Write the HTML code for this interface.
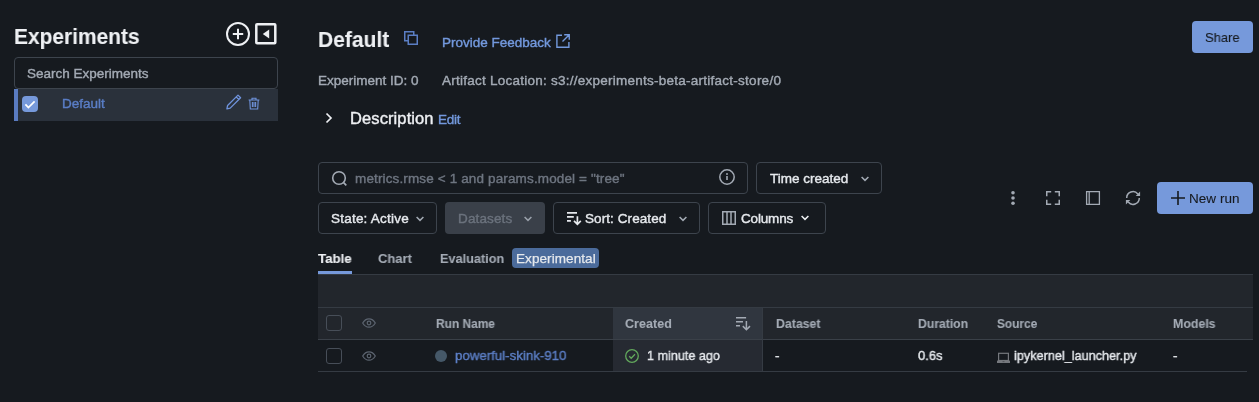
<!DOCTYPE html>
<html><head><meta charset="utf-8">
<style>
*{box-sizing:border-box;margin:0;padding:0}
html,body{width:1259px;height:402px;overflow:hidden;background:#161a1f;font-family:"Liberation Sans",sans-serif;color:#e6e9ed}
.a{position:absolute;white-space:nowrap;-webkit-text-stroke:0.4px currentColor;will-change:transform}
.b{position:absolute}
.btn{position:absolute;border:1px solid #3d444d;border-radius:4px;height:32px}
svg{position:absolute;overflow:visible}
</style></head><body>
<div class="a" style="left:14.00px;top:25.75px;font-size:22.5px;line-height:22.5px;font-weight:700;color:#eef0f3;letter-spacing:0px;transform:scaleX(0.93);transform-origin:0 0;-webkit-text-stroke:0.1px currentColor;">Experiments</div>
<svg style="left:226px;top:22px" width="24" height="24" viewBox="0 0 24 24"><circle cx="12" cy="12" r="11" fill="none" stroke="#eef0f3" stroke-width="2"/><path d="M6.8 12h10.4M12 6.8v10.4" stroke="#eef0f3" stroke-width="2"/></svg>
<svg style="left:255px;top:23px" width="22" height="22" viewBox="0 0 22 22"><rect x="1.3" y="1.3" width="19" height="19" rx="0.8" fill="none" stroke="#eef0f3" stroke-width="2.5"/><path d="M7.8 11L14.2 6.5v9z" fill="#eef0f3"/></svg>
<div class="b" style="left:14px;top:57px;width:264px;height:32px;border:1px solid #3d444d;border-radius:4px"></div>
<div class="b" style="left:14px;top:89px;width:264px;height:32px;background:#2a313b"></div>
<div class="b" style="left:14px;top:89px;width:4px;height:32px;background:#5a7bc0"></div>
<div class="b" style="left:22px;top:96px;width:16px;height:16px;border-radius:4px;background:#7699db"></div>
<svg style="left:22px;top:96px" width="16" height="16" viewBox="0 0 16 16"><path d="M3.4 8.3l3 3.2L12.6 5.4" fill="none" stroke="#fff" stroke-width="1.7"/></svg>
<svg style="left:225px;top:93px" width="16" height="16" viewBox="0 0 16 16"><path d="M13 2.1L15.6 4.7L5.2 15.1L1.9 15.9L2.6 12.5Z M11.2 3.9l2.6 2.6" fill="none" stroke="#6f93dc" stroke-width="1.3" stroke-linejoin="round"/></svg>
<svg style="left:248px;top:97px" width="12" height="13" viewBox="0 0 12 13"><path d="M0.6 3h10.8M4 3V1.3h4V3M1.8 3.2l.5 8.8h7.4l.5-8.8M4.4 5v5M6 5v5M7.6 5v5" fill="none" stroke="#6f93dc" stroke-width="1.1"/></svg>
<div class="a" style="left:27.20px;top:66.57px;font-size:13.5px;line-height:13.5px;font-weight:400;color:#a3aab4;letter-spacing:0px;">Search Experiments</div>
<div class="a" style="left:61.80px;top:96.57px;font-size:13.5px;line-height:13.5px;font-weight:400;color:#5a7ec6;letter-spacing:0px;">Default</div>
<div class="a" style="left:318.00px;top:29.25px;font-size:22.5px;line-height:22.5px;font-weight:700;color:#eef0f3;letter-spacing:0px;transform:scaleX(0.934);transform-origin:0 0;-webkit-text-stroke:0.1px currentColor;">Default</div>
<svg style="left:404px;top:31px" width="14" height="14" viewBox="0 0 14 14"><path d="M0.75 0.75h9v9h-9z" fill="none" stroke="#5b7ec4" stroke-width="1.5"/><path d="M4.25 4.25h9v9h-9z" fill="#161a1f" stroke="#5b7ec4" stroke-width="1.5"/></svg>
<svg style="left:556px;top:34px" width="14" height="14" viewBox="0 0 14 14"><path d="M6 1.2H0.9v12h12V8M8.2 0.75h5.05v5.05M13.25 0.75L6.5 7.5" fill="none" stroke="#7399dd" stroke-width="1.4"/></svg>
<div class="b" style="left:1192px;top:21px;width:61px;height:32px;border-radius:4px;background:#7699db"></div>
<div class="a" style="left:442.00px;top:35.57px;font-size:13.5px;line-height:13.5px;font-weight:400;color:#7399dd;letter-spacing:0px;">Provide Feedback</div>
<div class="a" style="left:1204.70px;top:30.57px;font-size:13.5px;line-height:13.5px;font-weight:400;color:#161a1f;letter-spacing:0px;-webkit-text-stroke:0.1px currentColor;transform:scaleX(0.96);transform-origin:0 0;">Share</div>
<div class="a" style="left:318.00px;top:73.57px;font-size:13.5px;line-height:13.5px;font-weight:400;color:#a3aab4;letter-spacing:-0.0px;">Experiment ID: 0</div>
<div class="a" style="left:442.00px;top:73.57px;font-size:13.5px;line-height:13.5px;font-weight:400;color:#a3aab4;letter-spacing:0.25px;">Artifact Location: s3://experiments-beta-artifact-store/0</div>
<svg style="left:324px;top:112px" width="10" height="12" viewBox="0 0 10 12"><path d="M2.5 1.5L7 6l-4.5 4.5" fill="none" stroke="#eef0f3" stroke-width="1.7"/></svg>
<div class="a" style="left:350.00px;top:110.03px;font-size:16.5px;line-height:16.5px;font-weight:400;color:#eef0f3;letter-spacing:0.1px;">Description</div>
<div class="a" style="left:437.50px;top:112.77px;font-size:13.5px;line-height:13.5px;font-weight:400;color:#7399dd;letter-spacing:-0.25px;">Edit</div>
<div class="btn" style="left:318px;top:162px;width:430px"></div>
<svg style="left:331px;top:170px" width="16" height="16" viewBox="0 0 16 16"><circle cx="8" cy="8" r="6.3" fill="none" stroke="#a3aab4" stroke-width="1.6"/><path d="M12.6 12.6l2.7 2.7" stroke="#a3aab4" stroke-width="1.7"/></svg>
<svg style="left:719px;top:169px" width="16" height="16" viewBox="0 0 16 16"><circle cx="8" cy="8" r="7.2" fill="none" stroke="#a3aab4" stroke-width="1.5"/><path d="M8 7.1v4" stroke="#a3aab4" stroke-width="1.6"/><circle cx="8" cy="5" r="0.95" fill="#a3aab4"/></svg>
<div class="btn" style="left:756px;top:162px;width:126px"></div>
<svg style="left:860px;top:175px" width="10" height="8" viewBox="0 0 10 8"><path d="M1.6 2l3.4 3.4L8.4 2" fill="none" stroke="#a3aab4" stroke-width="1.5"/></svg>
<div class="a" style="left:355.00px;top:171.57px;font-size:13.5px;line-height:13.5px;font-weight:400;color:#6e7580;letter-spacing:0.137px;">metrics.rmse &lt; 1 and params.model = "tree"</div>
<div class="a" style="left:769.70px;top:171.57px;font-size:13.5px;line-height:13.5px;font-weight:400;color:#e6e9ed;letter-spacing:0px;">Time created</div>
<div class="btn" style="left:318px;top:202px;width:119px"></div>
<div class="b" style="left:445px;top:202px;width:100px;height:32px;border-radius:4px;background:#3a4049"></div>
<div class="btn" style="left:553px;top:202px;width:147px"></div>
<svg style="left:560px;top:205px" width="24" height="24" viewBox="0 0 24 24"><path d="M7 7.8h10M7 11.8h6.8M7 15.9h3.9M17.4 11.2v8.2M14 15.8l3.4 3.5 3.4-3.5" fill="none" stroke="#e6e9ed" stroke-width="1.7"/></svg>
<div class="btn" style="left:708px;top:202px;width:118px"></div>
<svg style="left:722px;top:211px" width="14" height="14" viewBox="0 0 14 14"><path d="M0.75 0.75h12.5v12.5H0.75zM5 0.75v12.5M9 0.75v12.5" fill="none" stroke="#a3aab4" stroke-width="1.5"/></svg>
<svg style="left:415px;top:215px" width="10" height="8" viewBox="0 0 10 8"><path d="M1.6 2l3.4 3.4L8.4 2" fill="none" stroke="#a3aab4" stroke-width="1.5"/></svg>
<svg style="left:523px;top:215px" width="10" height="8" viewBox="0 0 10 8"><path d="M1.6 2l3.4 3.4L8.4 2" fill="none" stroke="#9aa1ab" stroke-width="1.5"/></svg>
<svg style="left:678px;top:215px" width="10" height="8" viewBox="0 0 10 8"><path d="M1.6 2l3.4 3.4L8.4 2" fill="none" stroke="#a3aab4" stroke-width="1.5"/></svg>
<svg style="left:800px;top:214px" width="10" height="8" viewBox="0 0 10 8"><path d="M1.6 2l3.4 3.4L8.4 2" fill="none" stroke="#eef0f3" stroke-width="1.5"/></svg>
<div class="a" style="left:330.70px;top:211.57px;font-size:13.5px;line-height:13.5px;font-weight:400;color:#e6e9ed;letter-spacing:0.22px;">State: Active</div>
<div class="a" style="left:457.50px;top:211.57px;font-size:13.5px;line-height:13.5px;font-weight:400;color:#6b727d;letter-spacing:0.14px;">Datasets</div>
<div class="a" style="left:585.00px;top:211.57px;font-size:13.5px;line-height:13.5px;font-weight:400;color:#e6e9ed;letter-spacing:0.08px;">Sort: Created</div>
<div class="a" style="left:741.00px;top:211.57px;font-size:13.5px;line-height:13.5px;font-weight:400;color:#e6e9ed;letter-spacing:-0.17px;">Columns</div>
<svg style="left:1010px;top:190px" width="6" height="16" viewBox="0 0 6 16"><circle cx="3" cy="2.8" r="1.8" fill="#a3aab4"/><circle cx="3" cy="8" r="1.8" fill="#a3aab4"/><circle cx="3" cy="13.3" r="1.8" fill="#a3aab4"/></svg>
<svg style="left:1046px;top:191px" width="14" height="14" viewBox="0 0 14 14"><path d="M0.75 5.2V0.75H5.2M8.8 0.75h4.45V5.2M13.25 8.8v4.45H8.8M5.2 13.25H0.75V8.8" fill="none" stroke="#a3aab4" stroke-width="1.5"/></svg>
<svg style="left:1086px;top:191px" width="14" height="14" viewBox="0 0 14 14"><path d="M0.6 0.6h12.8v12.8H0.6zM3.2 0.6v12.8" fill="none" stroke="#a3aab4" stroke-width="1.3"/></svg>
<svg style="left:1125px;top:190px" width="16" height="16" viewBox="0 0 16 16"><path d="M1.7 8A6.3 6.3 0 0 1 12.83 3.95M14.3 8A6.3 6.3 0 0 1 3.17 12.05" fill="none" stroke="#a3aab4" stroke-width="1.5"/><path d="M15.1 1.6v4.4h-4.4z M0.9 14.4v-4.4h4.4z" fill="#a3aab4"/></svg>
<div class="b" style="left:1157px;top:182px;width:96px;height:32px;border-radius:4px;background:#7699db"></div>
<svg style="left:1171px;top:191px" width="14" height="14" viewBox="0 0 14 14"><path d="M0 7h14M7 0v14" stroke="#161a1f" stroke-width="1.6"/></svg>
<div class="a" style="left:1189.30px;top:191.57px;font-size:13.5px;line-height:13.5px;font-weight:400;color:#161a1f;letter-spacing:0.03px;-webkit-text-stroke:0.1px currentColor;">New run</div>
<div class="a" style="left:318.30px;top:251.57px;font-size:13.5px;line-height:13.5px;font-weight:700;color:#eef0f3;letter-spacing:0px;transform:scaleX(0.982);transform-origin:0 0;-webkit-text-stroke:0.1px currentColor;">Table</div>
<div class="a" style="left:378.40px;top:251.57px;font-size:13.5px;line-height:13.5px;font-weight:700;color:#a3aab4;letter-spacing:0px;transform:scaleX(0.961);transform-origin:0 0;-webkit-text-stroke:0.1px currentColor;">Chart</div>
<div class="a" style="left:440.00px;top:251.57px;font-size:13.5px;line-height:13.5px;font-weight:700;color:#a3aab4;letter-spacing:0px;transform:scaleX(0.941);transform-origin:0 0;-webkit-text-stroke:0.1px currentColor;">Evaluation</div>
<div class="b" style="left:512px;top:248px;width:87px;height:20px;border-radius:4px;background:#4b6b9b"></div>
<div class="a" style="left:515.80px;top:251.57px;font-size:13.5px;line-height:13.5px;font-weight:400;color:#e6e9ed;letter-spacing:0.08px;-webkit-text-stroke:0.25px currentColor;">Experimental</div>
<div class="b" style="left:318px;top:271px;width:34px;height:3px;background:#7699db"></div>
<div class="b" style="left:318px;top:274px;width:935px;height:1px;background:#353b43"></div>
<div class="b" style="left:318px;top:275px;width:935px;height:64px;background:#22262c"></div>
<div class="b" style="left:318px;top:307px;width:935px;height:1px;background:#353b43"></div>
<div class="b" style="left:613px;top:308px;width:150px;height:31px;background:#30363f"></div>
<div class="b" style="left:318px;top:339px;width:935px;height:1px;background:#3a4048"></div>
<div class="b" style="left:613px;top:340px;width:150px;height:31px;background:#262a32"></div>
<div class="b" style="left:762px;top:308px;width:1px;height:63px;background:#353b43"></div>
<div class="b" style="left:318px;top:371px;width:929px;height:1px;background:#353b43"></div>
<div class="b" style="left:326px;top:315px;width:16px;height:16px;border:1px solid #474e58;border-radius:3px"></div>
<div class="b" style="left:326px;top:348px;width:16px;height:16px;border:1px solid #474e58;border-radius:3px"></div>
<svg style="left:362px;top:318px" width="14" height="10" viewBox="0 0 14 10"><path d="M0.7 5C2.5 1.9 4.6 0.8 7 0.8S11.5 1.9 13.3 5C11.5 8.1 9.4 9.2 7 9.2S2.5 8.1 0.7 5z" fill="none" stroke="#5c6470" stroke-width="1.2"/><circle cx="7" cy="5" r="1.8" fill="none" stroke="#5c6470" stroke-width="1.2"/></svg>
<svg style="left:362px;top:351px" width="14" height="10" viewBox="0 0 14 10"><path d="M0.7 5C2.5 1.9 4.6 0.8 7 0.8S11.5 1.9 13.3 5C11.5 8.1 9.4 9.2 7 9.2S2.5 8.1 0.7 5z" fill="none" stroke="#5c6470" stroke-width="1.2"/><circle cx="7" cy="5" r="1.8" fill="none" stroke="#5c6470" stroke-width="1.2"/></svg>
<svg style="left:730px;top:312px" width="24" height="24" viewBox="0 0 24 24"><path d="M6 5.8h10.1M6 9.8h7M6 13.8h4M16.4 8.9v8.6M12.8 14.1l3.6 3.6 3.6-3.6" fill="none" stroke="#a3aab4" stroke-width="1.5"/></svg>
<div class="b" style="left:435px;top:350px;width:12px;height:12px;border-radius:50%;background:#455868"></div>
<svg style="left:625px;top:349px" width="14" height="14" viewBox="0 0 14 14"><circle cx="7" cy="7" r="6.3" fill="none" stroke="#62a85c" stroke-width="1.3"/><path d="M4.2 7.2l2 2 3.8-4" fill="none" stroke="#62a85c" stroke-width="1.3"/></svg>
<svg style="left:997px;top:352px" width="13" height="12" viewBox="0 0 13 12"><rect x="1.6" y="1.3" width="9.8" height="7.2" fill="none" stroke="#75787d" stroke-width="1.2"/><path d="M0 8.6h13v2.4H0z" fill="#75787d"/><path d="M5.5 9.6h2" stroke="#4a4d52" stroke-width="0.8"/></svg>
<div class="a" style="left:435.70px;top:318.12px;font-size:12.5px;line-height:12.5px;font-weight:700;color:#a3aab4;letter-spacing:0px;transform:scaleX(0.955);transform-origin:0 0;-webkit-text-stroke:0.1px currentColor;">Run Name</div>
<div class="a" style="left:625.30px;top:318.12px;font-size:12.5px;line-height:12.5px;font-weight:700;color:#a3aab4;letter-spacing:0.05px;-webkit-text-stroke:0.1px currentColor;">Created</div>
<div class="a" style="left:775.50px;top:318.12px;font-size:12.5px;line-height:12.5px;font-weight:700;color:#a3aab4;letter-spacing:0px;transform:scaleX(0.985);transform-origin:0 0;-webkit-text-stroke:0.1px currentColor;">Dataset</div>
<div class="a" style="left:917.60px;top:318.12px;font-size:12.5px;line-height:12.5px;font-weight:700;color:#a3aab4;letter-spacing:0px;transform:scaleX(0.975);transform-origin:0 0;-webkit-text-stroke:0.1px currentColor;">Duration</div>
<div class="a" style="left:997.20px;top:318.12px;font-size:12.5px;line-height:12.5px;font-weight:700;color:#a3aab4;letter-spacing:0px;transform:scaleX(0.949);transform-origin:0 0;-webkit-text-stroke:0.1px currentColor;">Source</div>
<div class="a" style="left:1173.40px;top:318.12px;font-size:12.5px;line-height:12.5px;font-weight:700;color:#a3aab4;letter-spacing:0px;transform:scaleX(0.988);transform-origin:0 0;-webkit-text-stroke:0.1px currentColor;">Models</div>
<div class="a" style="left:455.40px;top:348.87px;font-size:13.5px;line-height:13.5px;font-weight:400;color:#5c7fc6;letter-spacing:0px;transform:scaleX(0.984);transform-origin:0 0;">powerful-skink-910</div>
<div class="a" style="left:647.40px;top:348.87px;font-size:13.5px;line-height:13.5px;font-weight:400;color:#e6e9ed;letter-spacing:0px;transform:scaleX(0.935);transform-origin:0 0;">1 minute ago</div>
<div class="a" style="left:775.00px;top:348.87px;font-size:13.5px;line-height:13.5px;font-weight:400;color:#e6e9ed;letter-spacing:0px;">-</div>
<div class="a" style="left:917.60px;top:348.87px;font-size:13.5px;line-height:13.5px;font-weight:400;color:#e6e9ed;letter-spacing:0px;transform:scaleX(0.964);transform-origin:0 0;">0.6s</div>
<div class="a" style="left:1014.40px;top:348.87px;font-size:13.5px;line-height:13.5px;font-weight:400;color:#e6e9ed;letter-spacing:0px;transform:scaleX(0.939);transform-origin:0 0;">ipykernel_launcher.py</div>
<div class="a" style="left:1173.00px;top:348.87px;font-size:13.5px;line-height:13.5px;font-weight:400;color:#e6e9ed;letter-spacing:0px;">-</div>
</body></html>
